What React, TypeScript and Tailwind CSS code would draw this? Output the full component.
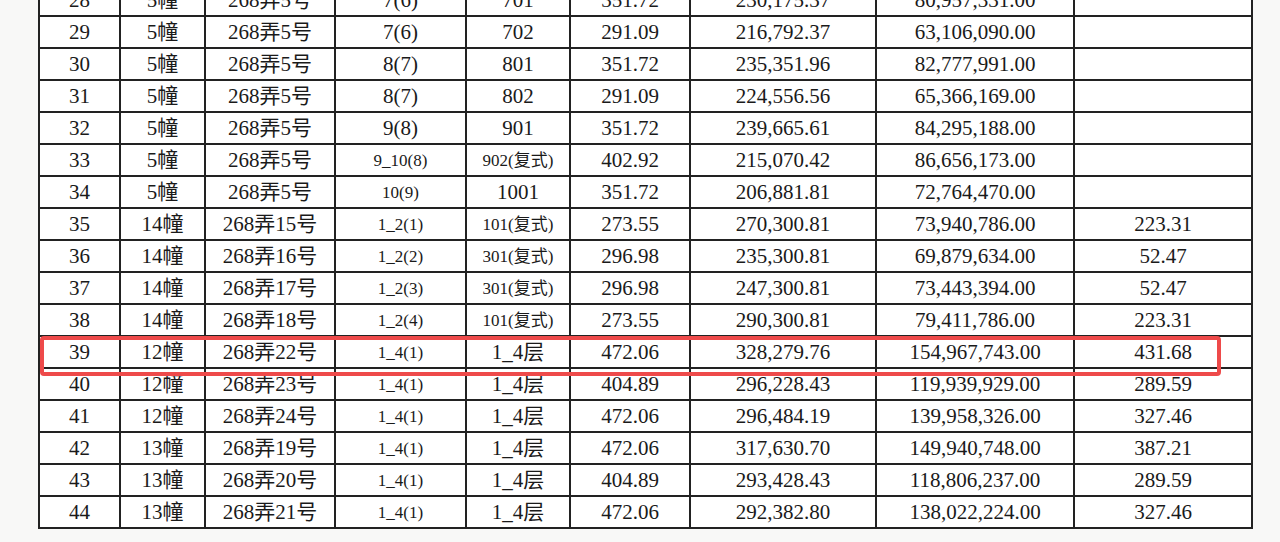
const rows: string[][] = [
  ['28', '5幢', '268弄5号', '7(6)', '701', '351.72', '230,175.37', '80,957,331.00', ''],
  ['29', '5幢', '268弄5号', '7(6)', '702', '291.09', '216,792.37', '63,106,090.00', ''],
  ['30', '5幢', '268弄5号', '8(7)', '801', '351.72', '235,351.96', '82,777,991.00', ''],
  ['31', '5幢', '268弄5号', '8(7)', '802', '291.09', '224,556.56', '65,366,169.00', ''],
  ['32', '5幢', '268弄5号', '9(8)', '901', '351.72', '239,665.61', '84,295,188.00', ''],
  ['33', '5幢', '268弄5号', '9_10(8)', '902(复式)', '402.92', '215,070.42', '86,656,173.00', ''],
  ['34', '5幢', '268弄5号', '10(9)', '1001', '351.72', '206,881.81', '72,764,470.00', ''],
  ['35', '14幢', '268弄15号', '1_2(1)', '101(复式)', '273.55', '270,300.81', '73,940,786.00', '223.31'],
  ['36', '14幢', '268弄16号', '1_2(2)', '301(复式)', '296.98', '235,300.81', '69,879,634.00', '52.47'],
  ['37', '14幢', '268弄17号', '1_2(3)', '301(复式)', '296.98', '247,300.81', '73,443,394.00', '52.47'],
  ['38', '14幢', '268弄18号', '1_2(4)', '101(复式)', '273.55', '290,300.81', '79,411,786.00', '223.31'],
  ['39', '12幢', '268弄22号', '1_4(1)', '1_4层', '472.06', '328,279.76', '154,967,743.00', '431.68'],
  ['40', '12幢', '268弄23号', '1_4(1)', '1_4层', '404.89', '296,228.43', '119,939,929.00', '289.59'],
  ['41', '12幢', '268弄24号', '1_4(1)', '1_4层', '472.06', '296,484.19', '139,958,326.00', '327.46'],
  ['42', '13幢', '268弄19号', '1_4(1)', '1_4层', '472.06', '317,630.70', '149,940,748.00', '387.21'],
  ['43', '13幢', '268弄20号', '1_4(1)', '1_4层', '404.89', '293,428.43', '118,806,237.00', '289.59'],
  ['44', '13幢', '268弄21号', '1_4(1)', '1_4层', '472.06', '292,382.80', '138,022,224.00', '327.46'],
];

const widths = [81, 85, 130, 131, 104, 120, 186, 198, 178];

// smaller print used in the scan for floor codes and duplex labels
const isSmall = (col: number, v: string) =>
  (col === 3 && v.includes('_')) || (col === 3 && v === '10(9)') || (col === 4 && v.includes('复式'));

export default function App() {
  return (
    <div className="relative w-[1280px] h-[542px] overflow-hidden bg-[#f8f8f7]">
      <div className="pl-[38px] -mt-[17px]">
        <table
          className="table-fixed border-collapse bg-white text-[#1a1a1a] text-[21px] leading-none"
          style={{ fontFamily: '"Liberation Serif", "Noto Sans CJK SC", serif' }}
        >
          <colgroup>
            {widths.map((w, i) => (
              <col key={i} style={{ width: w }} />
            ))}
          </colgroup>
          <tbody>
            {rows.map((r) => (
              <tr key={r[0]} className="h-[32px]">
                {r.map((v, i) => (
                  <td
                    key={i}
                    className={`border-2 border-[#222222] text-center align-middle p-0 ${
                      isSmall(i, v) ? 'text-[17px]' : ''
                    }`}
                  >
                    {v}
                  </td>
                ))}
              </tr>
            ))}
          </tbody>
        </table>
      </div>
      <div className="absolute left-[40px] top-[336px] w-[1181px] h-[40px] border-4 border-[#ee4a4a] rounded-[4px]" />
    </div>
  );
}
